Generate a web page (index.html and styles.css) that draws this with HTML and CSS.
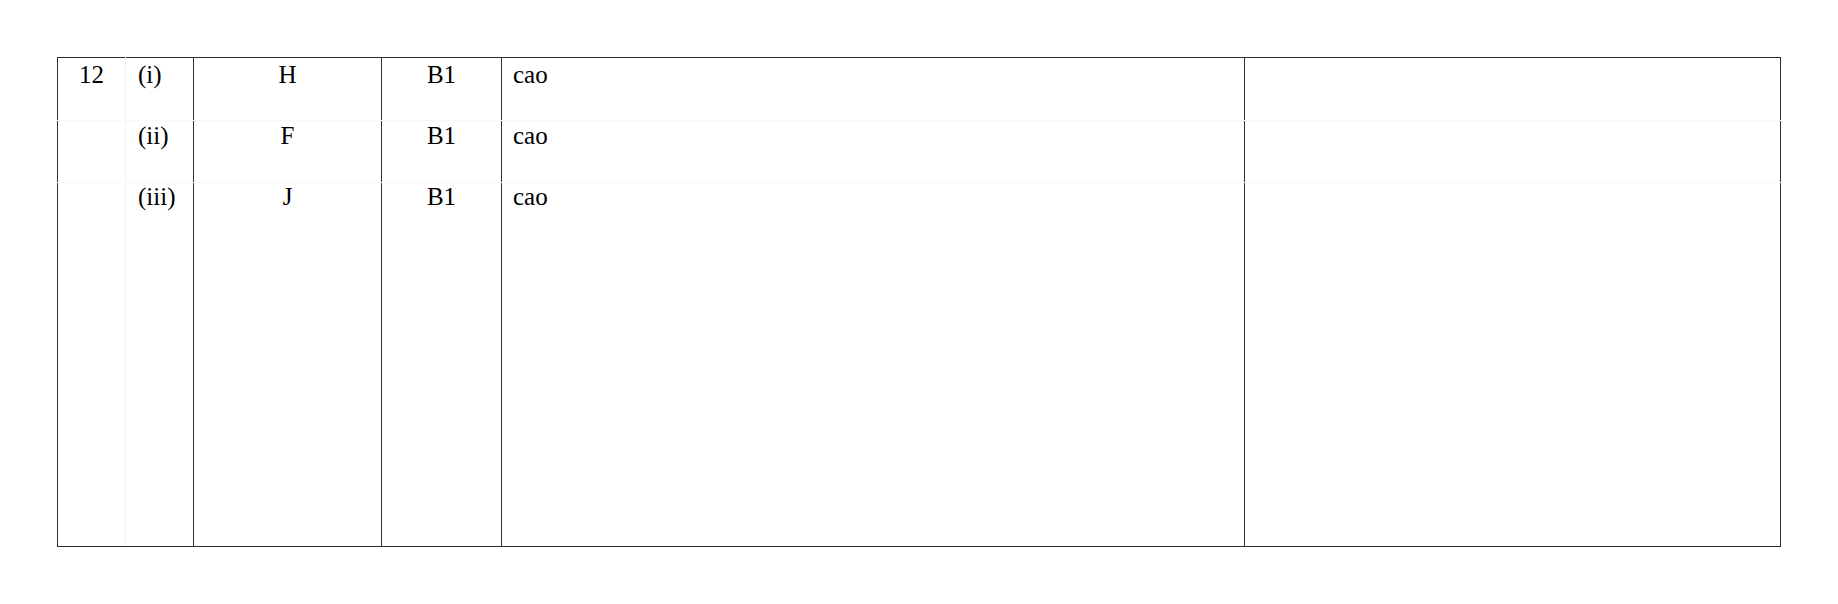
FILE: index.html
```html
<!DOCTYPE html>
<html>
<head>
<meta charset="utf-8">
<link rel="stylesheet" href="styles.css">
</head>
<body>
<table class="mark-table">
  <colgroup>
    <col class="c-num">
    <col class="c-part">
    <col class="c-ans">
    <col class="c-mark">
    <col class="c-guid">
    <col class="c-extra">
  </colgroup>
  <tr class="r1">
    <td class="num">12</td>
    <td class="part">(i)</td>
    <td class="center">H</td>
    <td class="center">B1</td>
    <td class="left">cao</td>
    <td class="left"></td>
  </tr>
  <tr class="r2">
    <td class="num"></td>
    <td class="part">(ii)</td>
    <td class="center">F</td>
    <td class="center">B1</td>
    <td class="left">cao</td>
    <td class="left"></td>
  </tr>
  <tr class="r3">
    <td class="num"></td>
    <td class="part">(iii)</td>
    <td class="center">J</td>
    <td class="center">B1</td>
    <td class="left">cao</td>
    <td class="left"></td>
  </tr>
</table>
</body>
</html>
```

FILE: styles.css
```css
html, body {
  margin: 0;
  padding: 0;
  background: #ffffff;
}

body {
  padding: 57px 0 0 57px;
  font-family: "Liberation Serif", "Times New Roman", serif;
  color: #000;
}

.mark-table {
  border-collapse: collapse;
  table-layout: fixed;
  width: 1723px;
  font-size: 25px;
  line-height: 28px;
}

.c-num { width: 68px; }
.c-part { width: 68px; }
.c-ans { width: 188px; }
.c-mark { width: 120px; }
.c-guid { width: 743px; }
.c-extra { width: 536px; }

.mark-table td {
  vertical-align: top;
  padding: 0 11px;
  border-left: 1px solid #2e2e2e;
  border-right: 1px solid #2e2e2e;
  border-top: 1px solid #f8f8f8;
  border-bottom: 1px solid #f8f8f8;
}

.mark-table td.num {
  text-align: center;
  border-right: 1px solid #f4f4f4;
}

.mark-table td.part {
  border-left: 1px solid #f4f4f4;
  padding-left: 12px;
}

.mark-table .r1 td { border-top: 1px solid #2e2e2e; }
.mark-table .r3 td { border-bottom: 1px solid #2e2e2e; }

.center { text-align: center; }
.left { text-align: left; }

.r1 td { height: 59px; padding-top: 3px; }
.r2 td { height: 60px; padding-top: 1px; }
.r3 td { height: 363px; padding-top: 0; }
```
